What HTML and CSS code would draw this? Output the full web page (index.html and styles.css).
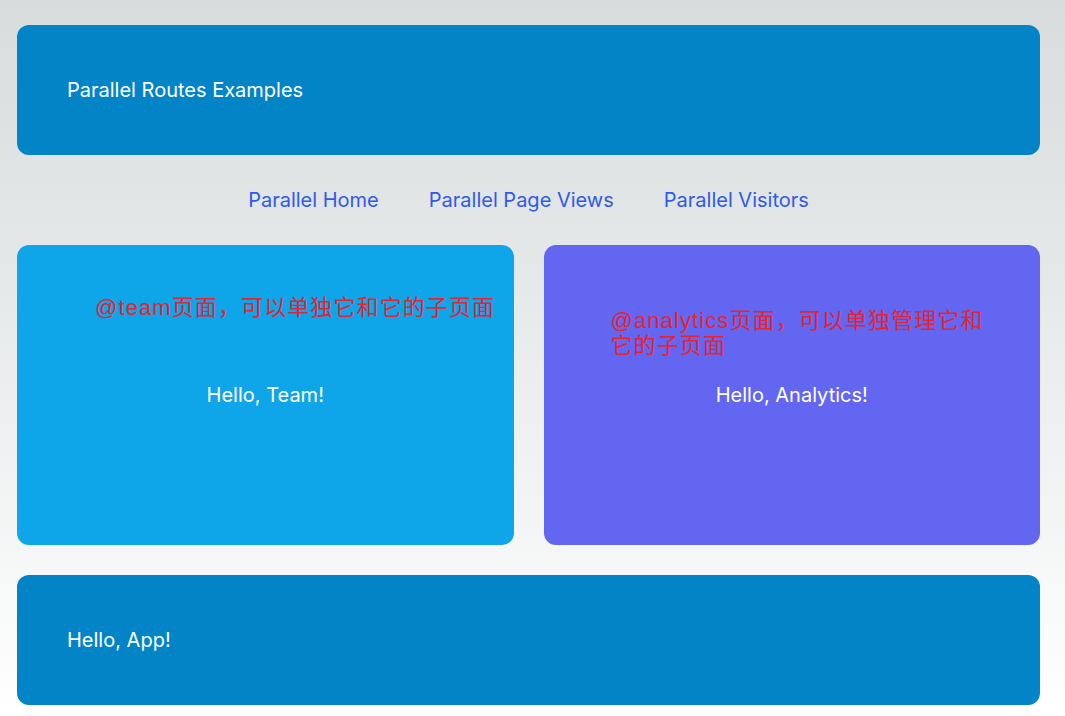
FILE: index.html
```html
<!DOCTYPE html>
<html lang="zh">
<head>
<meta charset="utf-8">
<title>Parallel Routes Examples</title>
<link rel="stylesheet" href="styles.css">
</head>
<body>
<div class="page">
  <header class="banner">Parallel Routes Examples</header>
  <nav class="nav">
    <a href="#">Parallel Home</a>
    <a href="#">Parallel Page Views</a>
    <a href="#">Parallel Visitors</a>
  </nav>
  <section class="cards">
    <div class="card card-team">
      <p class="note note-team">@team页面，可以单独它和它的子页面</p>
      <span class="hello">Hello, Team!</span>
    </div>
    <div class="card card-analytics">
      <p class="note note-analytics">@analytics页面，可以单独管理它和它的子页面</p>
      <span class="hello">Hello, Analytics!</span>
    </div>
  </section>
  <footer class="banner">Hello, App!</footer>
</div>
</body>
</html>
```
FILE: styles.css
```css
html, body {
  margin: 0;
  padding: 0;
}
body {
  min-height: 716px;
  background: linear-gradient(to bottom, #d8dcdd 0%, #e6e9ea 40%, #ffffff 100%);
  font-family: Inter, "Noto Sans", sans-serif;
}
.page {
  padding: 25px 25px 0 17px;
  display: flex;
  flex-direction: column;
}
.banner {
  background: #0284c7;
  color: #ffffff;
  border-radius: 12px;
  height: 130px;
  box-sizing: border-box;
  padding: 0 50px;
  display: flex;
  align-items: center;
  font-size: 20px;
}
.nav {
  display: flex;
  justify-content: center;
  gap: 50px;
  height: 90px;
  align-items: center;
}
.nav a {
  color: #2f5be8;
  text-decoration: none;
  font-size: 20px;
}
.cards {
  display: grid;
  grid-template-columns: 1fr 1fr;
  gap: 30px;
  margin-bottom: 30px;
}
.card {
  position: relative;
  height: 300px;
  border-radius: 12px;
  display: flex;
  align-items: center;
  justify-content: center;
  color: #ffffff;
  font-size: 20px;
}
.card-team { background: #0ea5e9; }
.card-analytics { background: #6366f1; }
.note {
  position: absolute;
  margin: 0;
  color: #e62330;
  font-family: "Liberation Sans", "Noto Sans CJK SC", sans-serif;
  font-size: 22px;
  line-height: 25px;
  letter-spacing: 1.1px;
}
.note-team {
  left: 78px;
  top: 50px;
  white-space: nowrap;
}
.note-analytics {
  left: 67px;
  top: 63px;
  width: 388px;
}
```
